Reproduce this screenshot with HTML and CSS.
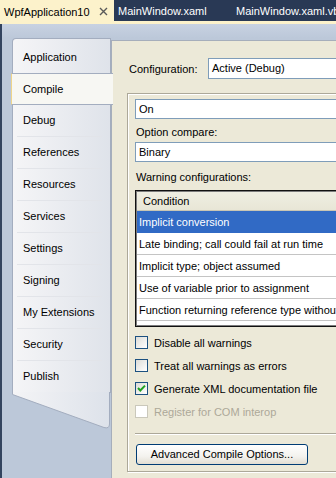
FILE: index.html
```html
<!doctype html>
<html>
<head>
	<meta charset="utf-8">
	<link rel="stylesheet" href="styles.css">
</head>
<body>

<div class="tabs">
	<div class="tab active">
		<span class="tabname">WpfApplication10</span>
		<svg class="close" width="9" height="9" viewBox="0 0 9 9"><path d="M1 1L8 8M8 1L1 8" stroke="#5a5a5a" stroke-width="1.4"/></svg>
	</div>
	<div class="tab">MainWindow.xaml</div>
	<div class="tab">MainWindow.xaml.vb</div>
</div>
<div class="strip"></div>

<div class="page">

	<div class="nav">
		<div class="nav-first">Application</div>
		<div class="nav-sel">Compile</div>
		<div class="nav-list">
			<div class="nav-item">Debug</div>
			<div class="nav-item">References</div>
			<div class="nav-item">Resources</div>
			<div class="nav-item">Services</div>
			<div class="nav-item">Settings</div>
			<div class="nav-item">Signing</div>
			<div class="nav-item">My Extensions</div>
			<div class="nav-item">Security</div>
			<div class="nav-item">Publish</div>
		</div>
		<svg class="nav-foot" width="98" height="38" viewBox="0 0 98 38">
			<defs>
				<linearGradient id="navgrad" x1="0" x2="1" y1="0" y2="0">
					<stop offset="0" stop-color="#f4f4f6"/>
					<stop offset="1" stop-color="#dde2ea"/>
				</linearGradient>
			</defs>
			<path d="M0.5 0V2.5L92 35.5Q97.5 37 97.5 32V0" fill="url(#navgrad)" stroke="#a3adbf"/>
		</svg>
	</div>

	<div class="content">

		<div class="config">
			<span class="config-label">Configuration:</span>
			<div class="combo">Active (Debug)</div>
		</div>

		<div class="group">

			<div class="textbox">On</div>
			<div class="label first">Option compare:</div>
			<div class="textbox">Binary</div>
			<div class="label">Warning configurations:</div>

			<div class="list">
				<div class="list-head">Condition</div>
				<div class="row selected">Implicit conversion</div>
				<div class="row">Late binding; call could fail at run time</div>
				<div class="row">Implicit type; object assumed</div>
				<div class="row">Use of variable prior to assignment</div>
				<div class="row">Function returning reference type without return value</div>
				<div class="row-rest"></div>
			</div>

			<div class="checks">
				<div class="check"><span class="box"></span>Disable all warnings</div>
				<div class="check"><span class="box"></span>Treat all warnings as errors</div>
				<div class="check"><span class="box">
					<svg width="11" height="11" viewBox="0 0 11 11"><path d="M2 5L4.3 7.5L9 2.6" fill="none" stroke="#21a121" stroke-width="2"/></svg>
				</span>Generate XML documentation file</div>
				<div class="check disabled"><span class="box"></span>Register for COM interop</div>
			</div>

			<div class="sep"></div>

			<div class="button">Advanced Compile Options...</div>

		</div>

	</div>

</div>

</body>
</html>
```

FILE: styles.css
```css
html, body { margin: 0; padding: 0; }
body { width: 336px; height: 478px; overflow: hidden; font: 11px "Liberation Sans", Arial, sans-serif; color: #000; background: #bfcadb; cursor: default; }

/* document tabs */
.tabs { display: flex; height: 21px; background: #293955; white-space: nowrap; }
.tab { width: 114px; padding-left: 4px; color: #fff; line-height: 22px; flex: none; }
.tab + .tab { width: 114px; }
.tab.active { width: 110px; height: 24px; background: #fcf2cb; color: #000; display: flex; align-items: center; line-height: 20px; }
.tabname { flex: 1; }
.close { margin-right: 6px; margin-top: -1px; }
.strip { height: 3px; background: #fcf2cb; }

/* page below the tabs */
.page { display: flex; height: 454px; padding-top: 14px; box-sizing: border-box; border-left: 2px solid #33445f; background: linear-gradient(#c8d2e2, #bcc8d9 14px); }

.nav { width: 109px; flex: none; padding-left: 10px; box-sizing: border-box; }
.nav-first { height: 35px; box-sizing: border-box; padding: 2px 0 0 10px; line-height: 32px; border: 1px solid #a3adbf; border-bottom: none; border-radius: 4px 0 0 0; background: linear-gradient(to right, #f5f5f7, #dfe3ea); }
.nav-sel { position: relative; z-index: 1; height: 32px; margin-left: -1px; margin-right: -2px; box-sizing: border-box; padding-left: 11px; line-height: 31px; border-top: 1px solid #a3adbf; border-bottom: 1px solid #a3adbf; border-left: 1px solid #efd58a; background: #f7f7f3; }
.nav-list { border-left: 1px solid #a3adbf; border-right: 1px solid #a3adbf; background: linear-gradient(to right, #f5f5f7, #dfe3ea); }
.nav-item { height: 32px; padding-left: 10px; line-height: 31px; box-sizing: border-box; background: linear-gradient(#e2e4e9, #e2e4e9) 4px 100% / calc(100% - 12px) 1px no-repeat; }
.nav-foot { display: block; margin-top: -1px; }

/* property page */
.content { flex: 1; margin-top: 2px; padding: 17px 0 0 15px; background: #ece9d8; border-top: 1px solid #a6aebb; border-left: 1px solid #a6aebb; overflow: hidden; }

.config { display: flex; align-items: center; padding-left: 2px; white-space: nowrap; }
.config-label { width: 79px; flex: none; }
.combo { width: 180px; flex: none; height: 21px; box-sizing: border-box; padding-left: 3px; line-height: 19px; border: 1px solid #7f9db9; background: #fff; }

.group { width: 260px; height: 379px; box-sizing: border-box; margin-top: 14px; padding: 5px 0 0 7px; border: 1px solid #aca899; box-shadow: inset 1px 1px #fff, 1px 1px #fff; }

.textbox { width: 230px; height: 20px; box-sizing: border-box; padding-left: 3px; line-height: 18px; border: 1px solid #7f9db9; background: #fff; }
.label { margin: 8px 0 6px 1px; line-height: 14px; }
.label.first { margin: 6px 0 3px 1px; }

.list { width: 230px; box-sizing: border-box; border: 1px solid #111; box-shadow: inset 0 0 0 1px #7c7c7c; background: #fff; padding: 1px; white-space: nowrap; overflow: hidden; }
.list-head { height: 19px; box-sizing: border-box; padding-left: 6px; line-height: 18px; background: linear-gradient(#efeee2, #e8e6d6); border-bottom: 1px solid #c9c6b4; }
.row { height: 22px; box-sizing: border-box; padding-left: 2px; line-height: 22px; border-bottom: 1px solid #c4c4c4; }
.row.selected { background: #316ac5; color: #fff; border-bottom-color: #316ac5; }
.row-rest { height: 4px; }

.checks { margin-top: 4px; }
.check { display: flex; align-items: center; height: 23px; white-space: nowrap; }
.box { width: 13px; height: 13px; box-sizing: border-box; margin-right: 6px; border: 1px solid #1c5180; background: linear-gradient(135deg, #dcdcd7, #fff); display: flex; align-items: center; justify-content: center; }
.check.disabled { color: #aca899; }
.check.disabled .box { border-color: #cac8bb; background: #fff; }

.sep { width: 230px; margin-top: 10px; border-top: 1px solid #aca899; box-shadow: 0 1px #fff; }

.button { width: 172px; height: 21px; box-sizing: border-box; margin: 10px 0 0 1px; line-height: 19px; text-align: center; border: 1px solid #003c74; border-radius: 3px; background: linear-gradient(#fff, #f3f2ee 60%, #e2ded2); }
```
